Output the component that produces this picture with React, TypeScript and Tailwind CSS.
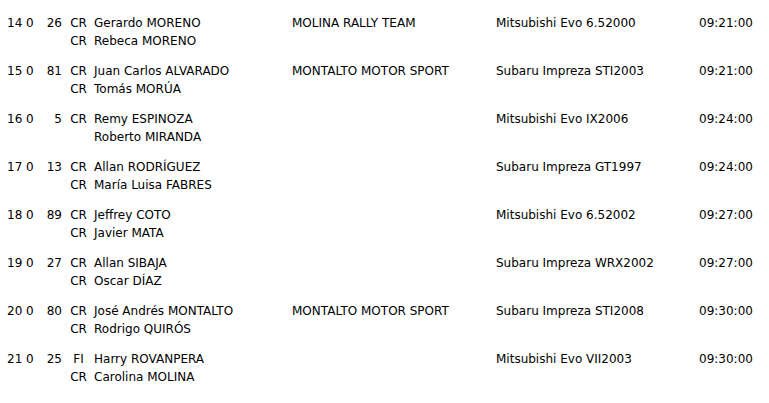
import React from "react";

type Row = {
  pos: string;
  num: string;
  c1: string;
  n1: string;
  c2: string;
  n2: string;
  team: string;
  car: string;
  time: string;
};

const rows: Row[] = [
  { pos: "14 0", num: "26", c1: "CR", n1: "Gerardo MORENO", c2: "CR", n2: "Rebeca MORENO", team: "MOLINA RALLY TEAM", car: "Mitsubishi Evo 6.52000", time: "09:21:00" },
  { pos: "15 0", num: "81", c1: "CR", n1: "Juan Carlos ALVARADO", c2: "CR", n2: "Tomás MORÚA", team: "MONTALTO MOTOR SPORT", car: "Subaru Impreza STI2003", time: "09:21:00" },
  { pos: "16 0", num: "5", c1: "CR", n1: "Remy ESPINOZA", c2: "", n2: "Roberto MIRANDA", team: "", car: "Mitsubishi Evo IX2006", time: "09:24:00" },
  { pos: "17 0", num: "13", c1: "CR", n1: "Allan RODRÍGUEZ", c2: "CR", n2: "María Luisa FABRES", team: "", car: "Subaru Impreza GT1997", time: "09:24:00" },
  { pos: "18 0", num: "89", c1: "CR", n1: "Jeffrey COTO", c2: "CR", n2: "Javier MATA", team: "", car: "Mitsubishi Evo 6.52002", time: "09:27:00" },
  { pos: "19 0", num: "27", c1: "CR", n1: "Allan SIBAJA", c2: "CR", n2: "Oscar DÍAZ", team: "", car: "Subaru Impreza WRX2002", time: "09:27:00" },
  { pos: "20 0", num: "80", c1: "CR", n1: "José Andrés MONTALTO", c2: "CR", n2: "Rodrigo QUIRÓS", team: "MONTALTO MOTOR SPORT", car: "Subaru Impreza STI2008", time: "09:30:00" },
  { pos: "21 0", num: "25", c1: "FI", n1: "Harry ROVANPERA", c2: "CR", n2: "Carolina MOLINA", team: "", car: "Mitsubishi Evo VII2003", time: "09:30:00" },
];

export default function App() {
  return (
    <div
      className="w-[769px] h-[403px] bg-white text-black text-[12px] leading-[18px] pl-[7px] pt-[14px] flex flex-col gap-[12px] overflow-hidden"
      style={{ fontFamily: '"DejaVu Sans", Verdana, sans-serif' }}
    >
      {rows.map((r) => (
        <div key={r.pos} className="flex whitespace-nowrap">
          <div className="w-[30px] shrink-0">{r.pos}</div>
          <div className="w-[25px] shrink-0 text-right">{r.num}</div>
          <div className="w-[17px] ml-[8px] shrink-0 flex flex-col items-center">
            <span>{r.c1}</span>
            <span>{r.c2 || "\u00a0"}</span>
          </div>
          <div className="w-[205px] shrink-0 pl-[7px] flex flex-col">
            <span>{r.n1}</span>
            <span>{r.n2}</span>
          </div>
          <div className="w-[204px] shrink-0">{r.team}</div>
          <div className="w-[203px] shrink-0">{r.car}</div>
          <div className="shrink-0">{r.time}</div>
        </div>
      ))}
    </div>
  );
}
